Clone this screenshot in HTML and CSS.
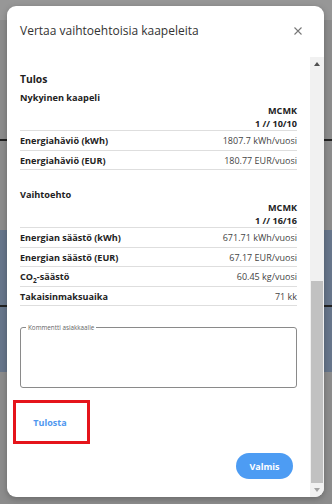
FILE: index.html
```
<!DOCTYPE html>
<html lang="fi">
<head>
    <meta charset="UTF-8">
    <meta name="viewport" content="width=device-width, initial-scale=1.0">
    <title>Vertaa vaihtoehtoisia kaapeleita</title>
    <link rel="stylesheet" href="styles.css">
</head>
<body>
    <div class="page">
        <div class="topbar"></div>
        <div class="rule rule-top"></div>
        <div class="panel">
            <div class="rule rule-panel"></div>
        </div>
    </div>

    <div class="modal">
        <header class="modal-header">
            <h2>Vertaa vaihtoehtoisia kaapeleita</h2>
            <button class="close" aria-label="Sulje">
                <svg width="8" height="8" viewBox="0 0 8 8"><path d="M0.5 0.5L7.5 7.5M7.5 0.5L0.5 7.5" stroke="#777" stroke-width="1.1" fill="none"/></svg>
            </button>
        </header>

        <div class="modal-body">
            <div class="content">
                <h3 class="result-title">Tulos</h3>

                <section class="cable">
                    <h4>Nykyinen kaapeli</h4>
                    <div class="cable-head">
                        <div>MCMK</div>
                        <div>1 // 10/10</div>
                    </div>
                    <div class="row"><span class="label">Energiahäviö (kWh)</span><span class="value">1807.7 kWh/vuosi</span></div>
                    <div class="row"><span class="label">Energiahäviö (EUR)</span><span class="value">180.77 EUR/vuosi</span></div>
                </section>

                <section class="cable alt">
                    <h4>Vaihtoehto</h4>
                    <div class="cable-head">
                        <div>MCMK</div>
                        <div>1 // 16/16</div>
                    </div>
                    <div class="row"><span class="label">Energian säästö (kWh)</span><span class="value">671.71 kWh/vuosi</span></div>
                    <div class="row"><span class="label">Energian säästö (EUR)</span><span class="value">67.17 EUR/vuosi</span></div>
                    <div class="row"><span class="label">CO<sub>2</sub>-säästö</span><span class="value">60.45 kg/vuosi</span></div>
                    <div class="row"><span class="label">Takaisinmaksuaika</span><span class="value">71 kk</span></div>
                </section>

                <fieldset class="comment">
                    <legend>Kommentti asiakkaalle</legend>
                    <textarea></textarea>
                </fieldset>

                <div class="print-mark">
                    <button class="btn-text">Tulosta</button>
                </div>

                <div class="actions">
                    <button class="btn-primary">Valmis</button>
                </div>
            </div>

            <div class="scrollbar">
                <div class="arrow arrow-up"></div>
                <div class="track">
                    <div class="thumb"></div>
                </div>
                <div class="arrow arrow-down"></div>
            </div>
        </div>
    </div>
</body>
</html>
```
FILE: styles.css
```
body {
    margin: 0;
    height: 504px;
    overflow: hidden;
    background: #8c8c8c;
    font-family: "Open Sans", "Noto Sans", sans-serif;
    color: #222;
}

/* app behind the dialog */
.page {
    height: 504px;
}

.topbar {
    height: 20px;
    background: #979797;
}

.rule {
    height: 2px;
    background: #222;
}

.rule-top {
    margin-top: 119px;
}

.panel {
    margin-top: 89px;
    height: 142px;
    background: #67768b;
    overflow: hidden;
}

.rule-panel {
    margin-top: 75px;
}

/* dialog */
.modal {
    position: absolute;
    left: 7px;
    top: 6px;
    width: 317px;
    height: 491px;
    background: white;
    border-radius: 9px;
    overflow: hidden;
    display: flex;
    flex-direction: column;
    box-shadow: 0 2px 6px rgba(0, 0, 0, 0.25);
}

.modal-header {
    height: 51px;
    display: flex;
    align-items: center;
    justify-content: space-between;
    padding: 0 22px 2px 13px;
    box-sizing: border-box;
}

.modal-header h2 {
    margin: 0;
    font-size: 12px;
    font-weight: 400;
    color: #333;
}

.close {
    border: none;
    background: none;
    padding: 0;
    width: 8px;
    height: 8px;
    display: flex;
}

.modal-body {
    flex: 1;
    display: flex;
    min-height: 0;
}

.content {
    flex: 1;
    padding: 15px 13px 0 13px;
    overflow: hidden;
}

.result-title {
    margin: 0;
    font-size: 10.3px;
    line-height: 14px;
    font-weight: 700;
}

.cable h4 {
    margin: 5px 0 0;
    font-size: 9.2px;
    line-height: 13px;
    font-weight: 700;
}

.cable.alt {
    margin-top: 18px;
}

.cable-head {
    text-align: right;
    font-size: 9.1px;
    line-height: 13px;
    font-weight: 700;
    border-bottom: 1px solid #dedede;
}

.row {
    display: flex;
    justify-content: space-between;
    padding: 3px 0 2.5px;
    line-height: 13px;
    font-size: 9.1px;
    border-bottom: 1px solid #dedede;
}

.row .label {
    font-weight: 700;
}

.row .value {
    font-size: 9px;
    color: #444;
}

.row sub {
    font-size: 6.5px;
    line-height: 0;
}

.comment {
    margin: 18px 0 0;
    padding: 0;
    height: 64px;
    box-sizing: border-box;
    border: 1px solid #8a8a8a;
    border-radius: 3px;
}

.comment legend {
    margin-left: 5px;
    padding: 0 2px;
    font-size: 6.3px;
    line-height: 7px;
    color: #666;
}

.comment textarea {
    display: none;
}

.print-mark {
    margin: 12px 0 0 -7px;
    width: 77px;
    height: 44px;
    box-sizing: border-box;
    border: 3px solid #e5141b;
    display: flex;
    align-items: center;
    justify-content: center;
}

.btn-text {
    border: none;
    background: none;
    padding: 0;
    margin-right: 3px;
    font-family: inherit;
    font-size: 9px;
    font-weight: 700;
    color: #4f97ef;
}

.actions {
    display: flex;
    justify-content: flex-end;
    margin-top: 9px;
    padding-right: 4px;
}

.btn-primary {
    width: 57px;
    height: 26px;
    border: none;
    border-radius: 13px;
    background: #4d9cf3;
    color: white;
    font-family: inherit;
    font-size: 9px;
    font-weight: 700;
}

/* scrollbar drawn to match the screenshot */
.scrollbar {
    width: 14px;
    background: #f1f1f1;
    display: flex;
    flex-direction: column;
}

.arrow {
    height: 14px;
    display: flex;
    align-items: center;
    justify-content: center;
}

.arrow::before {
    content: "";
    border-left: 3.5px solid transparent;
    border-right: 3.5px solid transparent;
}

.arrow-up::before {
    border-bottom: 4px solid #505050;
}

.arrow-down::before {
    border-top: 4px solid #a3a3a3;
}

.track {
    flex: 1;
    display: flex;
    flex-direction: column;
    justify-content: flex-end;
}

.thumb {
    height: 202px;
    margin: 0 1px;
    background: #c1c1c1;
}
```
